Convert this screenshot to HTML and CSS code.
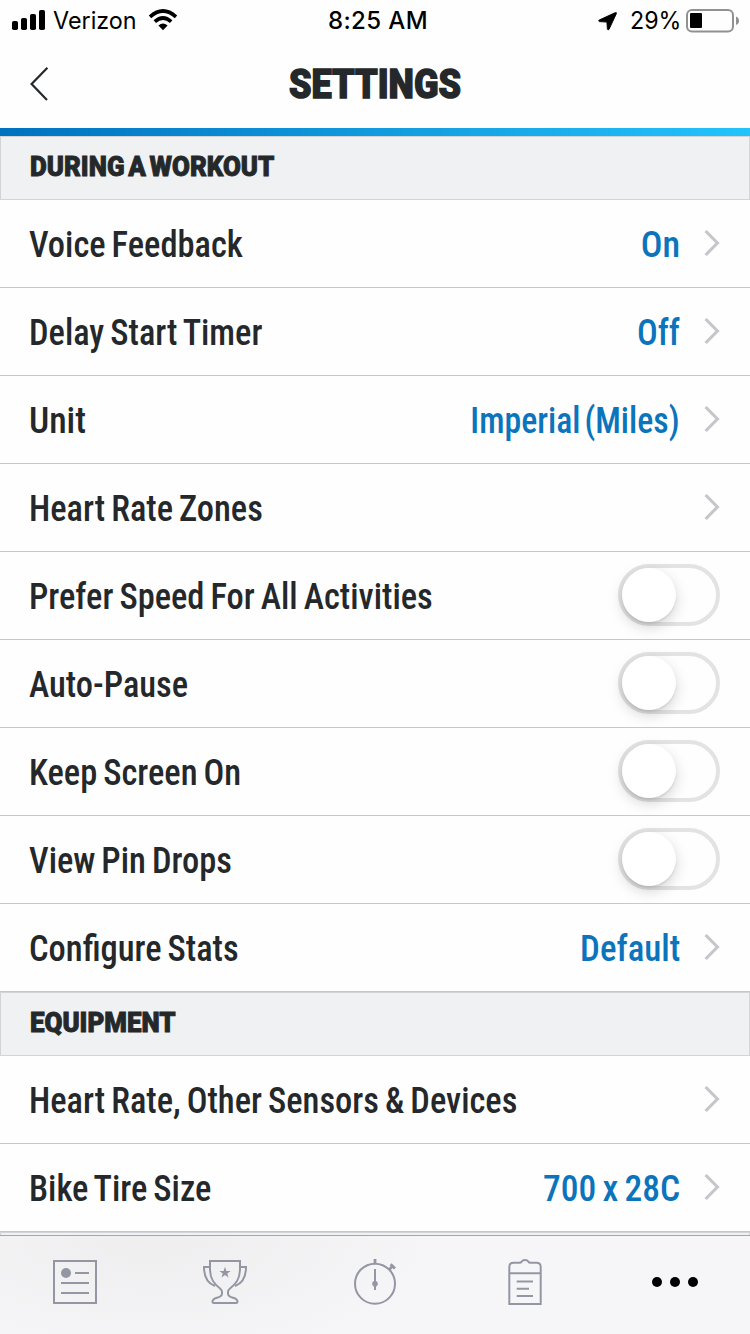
FILE: index.html
```html
<!DOCTYPE html>
<html lang="en">
<head>
<meta charset="utf-8">
<title>Settings</title>
<link rel="stylesheet" href="styles.css">
</head>
<body>
<svg class="defs" aria-hidden="true">
  <symbol id="chevron" viewBox="0 0 16 28"><path d="M1.6 2 L13.4 14 L1.6 26" fill="none" stroke="#c6c6cb" stroke-width="3.2"/></symbol>
</svg>
<div class="screen">
  <div class="status">
    <div class="status-left">
      <svg class="signal" width="34" height="20" viewBox="0 0 34 20"><rect x="0" y="11" width="6" height="9" rx="1.8"/><rect x="9" y="8" width="6" height="12" rx="1.8"/><rect x="18" y="4" width="6" height="16" rx="1.8"/><rect x="27" y="0" width="6" height="20" rx="1.8"/></svg>
      <span class="carrier">Verizon</span>
      <svg class="wifi" width="30" height="22" viewBox="0 0 30 22"><g fill="none" stroke="#000" stroke-width="3.6"><path d="M2 7.8 Q15 -3.8 28 7.8"/><path d="M6.8 12.7 Q15 5.3 23.2 12.7"/></g><path d="M10.4 16.6 Q15 12.6 19.6 16.6 L15 21.2 Z"/></svg>
    </div>
    <span class="clock">8:25 AM</span>
    <div class="status-right">
      <svg class="arrow" width="20" height="20" viewBox="0 0 20 20"><path d="M1.2 9 L17.4 1.6 Q18.8 1.2 18.4 2.6 L11 18.4 Q10 19.4 9.4 18.2 L8.9 11.1 L1.4 10.6 Q0 10 1.2 9Z" stroke="#000" stroke-width=".9" stroke-linejoin="round"/></svg>
      <span class="percent">29%</span>
      <svg class="battery" width="54" height="24" viewBox="0 0 54 24"><rect x="1" y="1" width="46" height="21.5" rx="5" fill="none" stroke="#919191" stroke-width="2"/><rect x="4" y="4" width="12" height="15" rx="1"/><path d="M50 7.5 Q53 8.5 53 11.8 Q53 15 50 16Z" fill="#919191"/></svg>
    </div>
  </div>
  <header class="nav">
    <svg class="back" width="20" height="36" viewBox="0 0 20 36"><path d="M17.4 1.8 L1.6 18 L17 34" fill="none" stroke="#25282a" stroke-width="2.2"/></svg>
    <h1 class="title">SETTINGS</h1>
  </header>
  <div class="accent"></div>
  <main class="content">
    <h2 class="section"><span class="section-name">DURING A WORKOUT</span></h2>
    <div class="row"><span class="label">Voice Feedback</span><span class="value value-on">On</span><svg class="chev"><use href="#chevron"/></svg></div>
    <div class="row"><span class="label">Delay Start Timer</span><span class="value">Off</span><svg class="chev"><use href="#chevron"/></svg></div>
    <div class="row"><span class="label label-unit">Unit</span><span class="value value-unit">Imperial (Miles)</span><svg class="chev"><use href="#chevron"/></svg></div>
    <div class="row"><span class="label">Heart Rate Zones</span><svg class="chev"><use href="#chevron"/></svg></div>
    <div class="row"><span class="label">Prefer Speed For All Activities</span><span class="toggle"><i class="knob"></i></span></div>
    <div class="row"><span class="label">Auto-Pause</span><span class="toggle"><i class="knob"></i></span></div>
    <div class="row"><span class="label">Keep Screen On</span><span class="toggle"><i class="knob"></i></span></div>
    <div class="row"><span class="label">View Pin Drops</span><span class="toggle"><i class="knob"></i></span></div>
    <div class="row"><span class="label">Configure Stats</span><span class="value value-default">Default</span><svg class="chev"><use href="#chevron"/></svg></div>
    <h2 class="section"><span class="section-name">EQUIPMENT</span></h2>
    <div class="row"><span class="label">Heart Rate, Other Sensors &amp; Devices</span><svg class="chev"><use href="#chevron"/></svg></div>
    <div class="row"><span class="label">Bike Tire Size</span><span class="value value-tire">700 x 28C</span><svg class="chev"><use href="#chevron"/></svg></div>
    <div class="section-peek"></div>
  </main>
  <nav class="tabs">
    <svg class="tab" viewBox="0 0 60 60"><rect x="9" y="9" width="42" height="42"/><circle cx="21" cy="21" r="5" class="solid"/><path d="M30 21H44M16 31H44M16 41H44"/></svg>
    <svg class="tab" viewBox="0 0 60 60"><path d="M15 9H45V17C45 27 41 32 35 36.5C33.5 37.7 33 38.5 33 40V41.5C33 44 35 45 38 45.8C41.5 46.8 42.5 47.8 42.5 49.5Q42.5 51 41 51H19Q17.5 51 17.5 49.5C17.5 47.8 18.5 46.8 22 45.8C25 45 27 44 27 41.5V40C27 38.5 26.5 37.7 25 36.5C19 32 15 27 15 17Z"/><path d="M15 15H9C9 24.5 13 31.5 20 34M45 15H51C51 24.5 47 31.5 40 34"/><path class="solid" d="M30 14.8L31.4 18.9L35.7 18.9L32.3 21.5L33.5 25.6L30 23.1L26.5 25.6L27.7 21.5L24.3 18.9L28.6 18.9Z"/></svg>
    <svg class="tab" viewBox="0 0 60 60"><circle cx="30" cy="31.7" r="20"/><path d="M30 17V38"/><circle cx="30" cy="31.7" r="2.8" class="solid"/><path stroke-width="2.8" d="M30 7V12M44 17.7L47.5 14.2M45.6 12.2L50 16.6"/></svg>
    <svg class="tab" viewBox="0 0 60 60"><path d="M14.3 52V15Q14.3 10.8 18.5 10.8H24.5Q26 10.8 26.5 9.8Q27.7 8 30 8Q32.3 8 33.5 9.8Q34 10.8 35.5 10.8H41.5Q45.7 10.8 45.7 15V52ZM14.3 21.2H45.7M21.7 29.4H38M21.7 36.7H34M21.7 43.9H38"/></svg>
    <svg class="tab tab-more" viewBox="0 0 60 60"><circle cx="12" cy="30" r="5"/><circle cx="30" cy="30" r="5"/><circle cx="48" cy="30" r="5"/></svg>
  </nav>
</div>
</body>
</html>
```
FILE: styles.css
```css
* { box-sizing: border-box; }
body { margin: 0; background: #fff; }
.defs { display: block; width: 0; height: 0; }
.screen { width: 750px; height: 1334px; display: flex; flex-direction: column; overflow: hidden; background: #fefefe; font-family: "Roboto Condensed", Roboto, sans-serif; color: #25282a; }

/* Status bar */
.status { flex: none; height: 40px; display: grid; grid-template-columns: 250px 250px 250px; color: #000; font: 400 24px/30px Inter, sans-serif; }
.status-left, .status-right { display: flex; align-items: flex-start; }
.status-left { padding: 0 0 0 12px; }
.signal { margin-top: 10px; flex: none; }
.carrier { margin: 6px 0 0 7px; width: 95px; flex: none; transform: scaleX(.972); transform-origin: left; }
.wifi { margin-top: 9px; flex: none; }
.clock { margin-top: 6px; padding-left: 6px; text-align: center; font-weight: 500; letter-spacing: .4px; }
.status-right { justify-content: flex-end; padding-right: 10px; }
.arrow { margin-top: 11px; flex: none; }
.percent { margin: 6px 0 0 12px; width: 56px; flex: none; transform: scaleX(.969); transform-origin: left; }
.battery { margin-top: 9px; flex: none; }

/* Title bar */
.nav { flex: none; height: 88px; display: grid; grid-template-columns: 60px 1fr 60px; align-items: center; }
.back { margin-left: 30px; }
.title { margin: 2px 0 0; text-align: center; font: 900 40px/48px Roboto, sans-serif; -webkit-text-stroke: 1.4px #25282a; transform: scaleX(.9); }
.accent { flex: none; height: 8px; background: linear-gradient(90deg, #0072bf, #23c3fc); }

/* Settings list */
.content { flex: 1; min-height: 0; display: flex; flex-direction: column; overflow: hidden; }
.section { flex: none; margin: 0; height: 64px; padding: 12px 0 0 29px; border: 1px solid #d3d4d8; background: #f0f1f3; font: 900 28px/36px Roboto, sans-serif; white-space: nowrap; }
.section-name { display: inline-block; word-spacing: -3px; -webkit-text-stroke: .9px #25282a; transform: scaleX(.925); transform-origin: left; }
.section-peek { flex: none; height: 10px; border: 1px solid #d3d4d8; background: #f0f1f3; }
.row { flex: none; height: 88px; padding: 0 30px 0 29px; border-bottom: 1px solid #c8c8cb; display: flex; align-items: center; font-size: 36px; font-weight: 500; line-height: 42px; white-space: nowrap; }
.label { flex: 1; min-width: 0; margin-top: 3px; word-spacing: -2px; transform: scaleX(.957); transform-origin: left; }
.value { margin-top: 3px; color: #0b74bb; transform: scaleX(.955); transform-origin: right; }
.label-unit { transform: scaleX(.99); }
.value-on { transform: scaleX(1); }
.value-unit { word-spacing: -4px; transform: scaleX(.94); }
.value-default { transform: scaleX(.97); }
.value-tire { word-spacing: -2px; transform: scaleX(.985); }
.chev { flex: none; width: 16px; height: 28px; margin: 0 0 2px 24px; }
.toggle { flex: none; width: 102px; height: 62px; margin-bottom: 2px; border: 4px solid #e3e3e3; border-radius: 31px; }
.knob { display: block; width: 54px; height: 54px; border-radius: 50%; background: #fff; box-shadow: 0 5px 14px rgba(0, 0, 0, .17), 0 2px 2px rgba(0, 0, 0, .08); }

/* Tab bar */
.tabs { flex: none; height: 99px; padding-top: 16px; border-top: 1px solid #a5a7ac; background: radial-gradient(ellipse 300px 130px at 150px 0, #eeeeef, rgba(238, 238, 239, 0)), #f6f6f8; display: grid; grid-template-columns: repeat(5, 1fr); justify-items: center; align-items: start; }
.tab { width: 60px; height: 60px; fill: none; stroke: #9496a3; stroke-width: 2; }
.solid { fill: #9496a3; stroke: none; }
.tab-more { fill: #000; stroke: none; }
```
